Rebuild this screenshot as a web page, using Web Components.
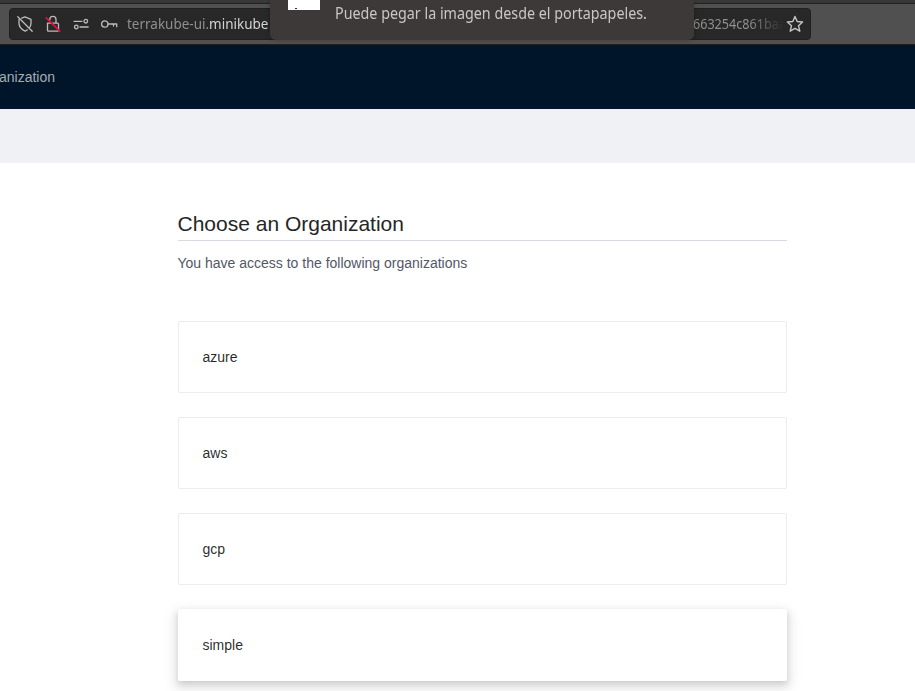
<!DOCTYPE html>
<html lang="en">
<head>
<meta charset="utf-8">
<title>Choose an Organization</title>
<style>
html,body{margin:0;height:100%;overflow:hidden;background:#fff;font-family:"Liberation Sans",Arial,sans-serif}
</style>
</head>
<body>
<app-window></app-window>
<script>
function define(name, html) {
  const template = document.createElement('template');
  template.innerHTML = html;
  customElements.define(name, class extends HTMLElement {
    constructor() {
      super();
      this.attachShadow({ mode: 'open' }).append(template.content.cloneNode(true));
    }
  });
}

define('url-bar', `
<style>
:host{display:flex;align-items:center;box-sizing:border-box;width:802px;height:32px;padding:0 7px;background:#282828;border:1px solid #202020;border-radius:4px;font:14px/30px "Noto Sans",sans-serif;color:#8f8f8f;white-space:nowrap}
.icons{display:flex;gap:12px;flex:none}
svg{display:block;width:16px;height:16px;fill:none;stroke:#bcbcbc;stroke-width:1.3;stroke-linecap:round;stroke-linejoin:round;overflow:visible}
.address{display:flex;justify-content:space-between;width:660px;margin-left:10px;-webkit-mask-image:linear-gradient(to right,#000 622px,transparent 657px)}
.address span{display:block;flex:none;transform-origin:left}
.host{transform:scaleX(.963);width:150px}
b{font-weight:400;color:#d4d4d4}
.rest{width:94px;transform:scaleX(.9)}
.star{stroke-width:1.4;stroke:#c4c4c4;flex:none}
</style>
<div class="icons">
<svg viewBox="0 0 16 16"><path d="M4.7 2.2 8 .9l6 2.4v4c0 1.8-.7 3.5-1.9 4.9M10.3 13.9 8 15.2C4 13.2 2 10.5 2 7.3V3.5M.8.8l14.4 14.4"/></svg>
<svg viewBox="0 0 16 16"><path d="M4.8 4V3.4a3.1 3.1 0 0 1 6.2 0v3.8M2.5 7.2h10a1 1 0 0 1 1 1v6a1 1 0 0 1-1 1h-9a1 1 0 0 1-1-1z"/><path stroke="#e80c40" stroke-width="1.7" d="m1.2 1.8 13.6 13.4"/></svg>
<svg viewBox="0 0 16 16"><path d="M1 5.3h8M7 11h8.2"/><circle cx="12.8" cy="5.2" r="1.8"/><circle cx="3.3" cy="11" r="1.8"/></svg>
<svg viewBox="0 0 16 16"><circle cx="3.8" cy="8" r="3.2"/><path d="M7 8h8.7v2.7M12.5 8v2"/></svg>
</div>
<div class="address"><span class="host">terrakube-ui.<b>minikube</b></span><span class="rest">663254c861baa</span></div>
<svg class="star" viewBox="0 0 16 16"><path d="m8 .5 2.2 5 5.4.5-4.1 3.7 1.3 5.5L8 12.3l-4.8 2.9 1.3-5.5L.4 6l5.4-.5z"/></svg>`);

define('paste-notice', `
<style>
:host{position:absolute;left:270px;top:0;box-sizing:border-box;width:424px;height:40px;display:flex;padding-left:18px;background:#3d3938;border-radius:0 0 6px 6px;box-shadow:0 0 5px rgba(0,0,0,.25);overflow:hidden}
.thumb{width:32px;height:10px;background:linear-gradient(#333,#333) 7px 8px/2px 1px no-repeat,#fff;flex:none;margin-right:15px}
p{margin:0;width:312px;font:15.5px/26px "Noto Sans",sans-serif;color:#c9c7c6;white-space:nowrap;transform:scaleX(.923);transform-origin:left}
</style>
<div class="thumb"></div><p><slot></slot></p>`);

define('browser-chrome', `
<style>
:host{display:flex;align-items:flex-start;position:relative;box-sizing:border-box;height:45px;padding:8px 9px 0;background:linear-gradient(#383838 3px,#222 3px 4px,#505050 4px 44px,#202020 44px)}
</style>
<url-bar></url-bar><paste-notice>Puede pegar la imagen desde el portapapeles.</paste-notice>`);

define('site-header', `
<style>
:host{display:flex;height:64px;background:#001529;color:#a6adb4;font-size:14px;line-height:64px;overflow:hidden}
span{width:55px;display:flex;justify-content:flex-end;white-space:nowrap}
</style>
<span>anization</span>`);

define('organization-card', `
<style>
:host{display:flex;align-items:center;box-sizing:border-box;height:72px;padding:0 24px;border:1px solid #ededed;border-radius:2px;background:#fff;color:rgba(0,0,0,.85);font-size:14px;line-height:22px}
:host([active]){border-color:transparent;box-shadow:0 1px 2px -2px rgba(0,0,0,.16),0 3px 6px rgba(0,0,0,.12),0 5px 12px 4px rgba(0,0,0,.09)}
</style>
<slot></slot>`);

define('organization-picker', `
<style>
:host{display:block;width:609.5px;padding:46px 0 0 177.5px}
h1{margin:0;padding-bottom:1px;height:30px;border-bottom:1px solid #d9d9e3;font-size:21px;font-weight:400;line-height:30px;color:#262626}
p{margin:11px 0 47px;font-size:14px;line-height:22px;color:#535766}
.list{display:grid;gap:24px}
</style>
<h1>Choose an Organization</h1>
<p>You have access to the following organizations</p>
<div class="list">
<organization-card>azure</organization-card>
<organization-card>aws</organization-card>
<organization-card>gcp</organization-card>
<organization-card active>simple</organization-card>
</div>`);

define('app-window', `
<style>
:host{display:flex;flex-direction:column;width:915px;height:691px;overflow:hidden;background:#fff}
.band{height:54px;background:#f0f1f5;flex:none}
browser-chrome,site-header,organization-picker{flex:none}
</style>
<browser-chrome></browser-chrome>
<site-header></site-header>
<div class="band"></div>
<organization-picker></organization-picker>`);
</script>
</body>
</html>
